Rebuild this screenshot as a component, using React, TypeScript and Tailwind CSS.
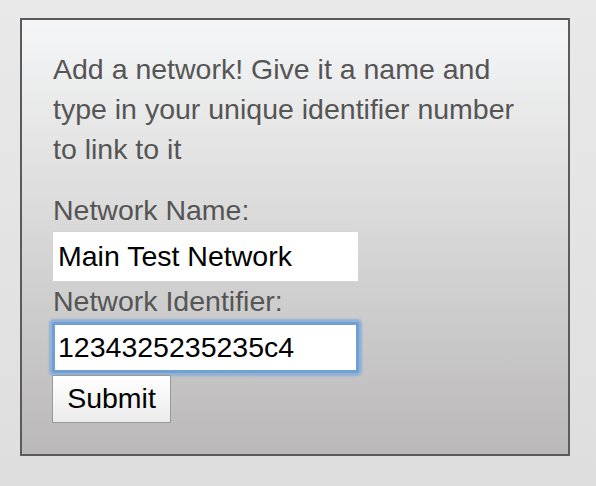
import React from "react";

export default function App() {
  return (
    <div className="w-[596px] h-[486px] overflow-hidden bg-[linear-gradient(to_bottom,#e9e9e9,#dedede)] pt-[18px] pl-[20px]" style={{ fontFamily: '"Liberation Sans", Arial, Helvetica, sans-serif' }}>
      <div className="w-[550px] h-[438px] border-2 border-[#5b5b5b] bg-[linear-gradient(to_bottom,#f5f6f7,#bab8b8)] pt-[29px] pl-[30px] flex flex-col items-start">
        <p className="ml-[1px] text-[28.5px] leading-[40px] text-[#555555] whitespace-nowrap">
          Add a network! Give it a name and
          <br />
          type in your unique identifier number
          <br />
          to link to it
        </p>
        <label className="ml-[1px] mt-[25px] text-[28.5px] leading-[32px] text-[#555555]">Network Name:</label>
        <input
          readOnly
          defaultValue="Main Test Network"
          className="mt-[5px] w-[307px] h-[51px] bg-white border border-[#d4d4d4] px-[5px] text-[28.5px] text-black outline-none"
        />
        <label className="ml-[1px] mt-[3px] text-[28.5px] leading-[32px] text-[#555555]">Network Identifier:</label>
        <input
          readOnly
          defaultValue="1234325235235c4"
          className="mt-[5px] w-[307px] h-[51px] bg-white border-[3px] border-[#6f9fd3] shadow-[0_0_2px_3px_rgba(125,170,220,0.75)] rounded-[2px] px-[3px] text-[28.5px] text-black outline-none"
        />
        <button className="mt-[2px] w-[119px] h-[48px] border border-[#999999] bg-[linear-gradient(to_bottom,#ffffff,#ebebeb)] text-[28.5px] leading-none text-black pb-[2px]">
          Submit
        </button>
      </div>
    </div>
  );
}
